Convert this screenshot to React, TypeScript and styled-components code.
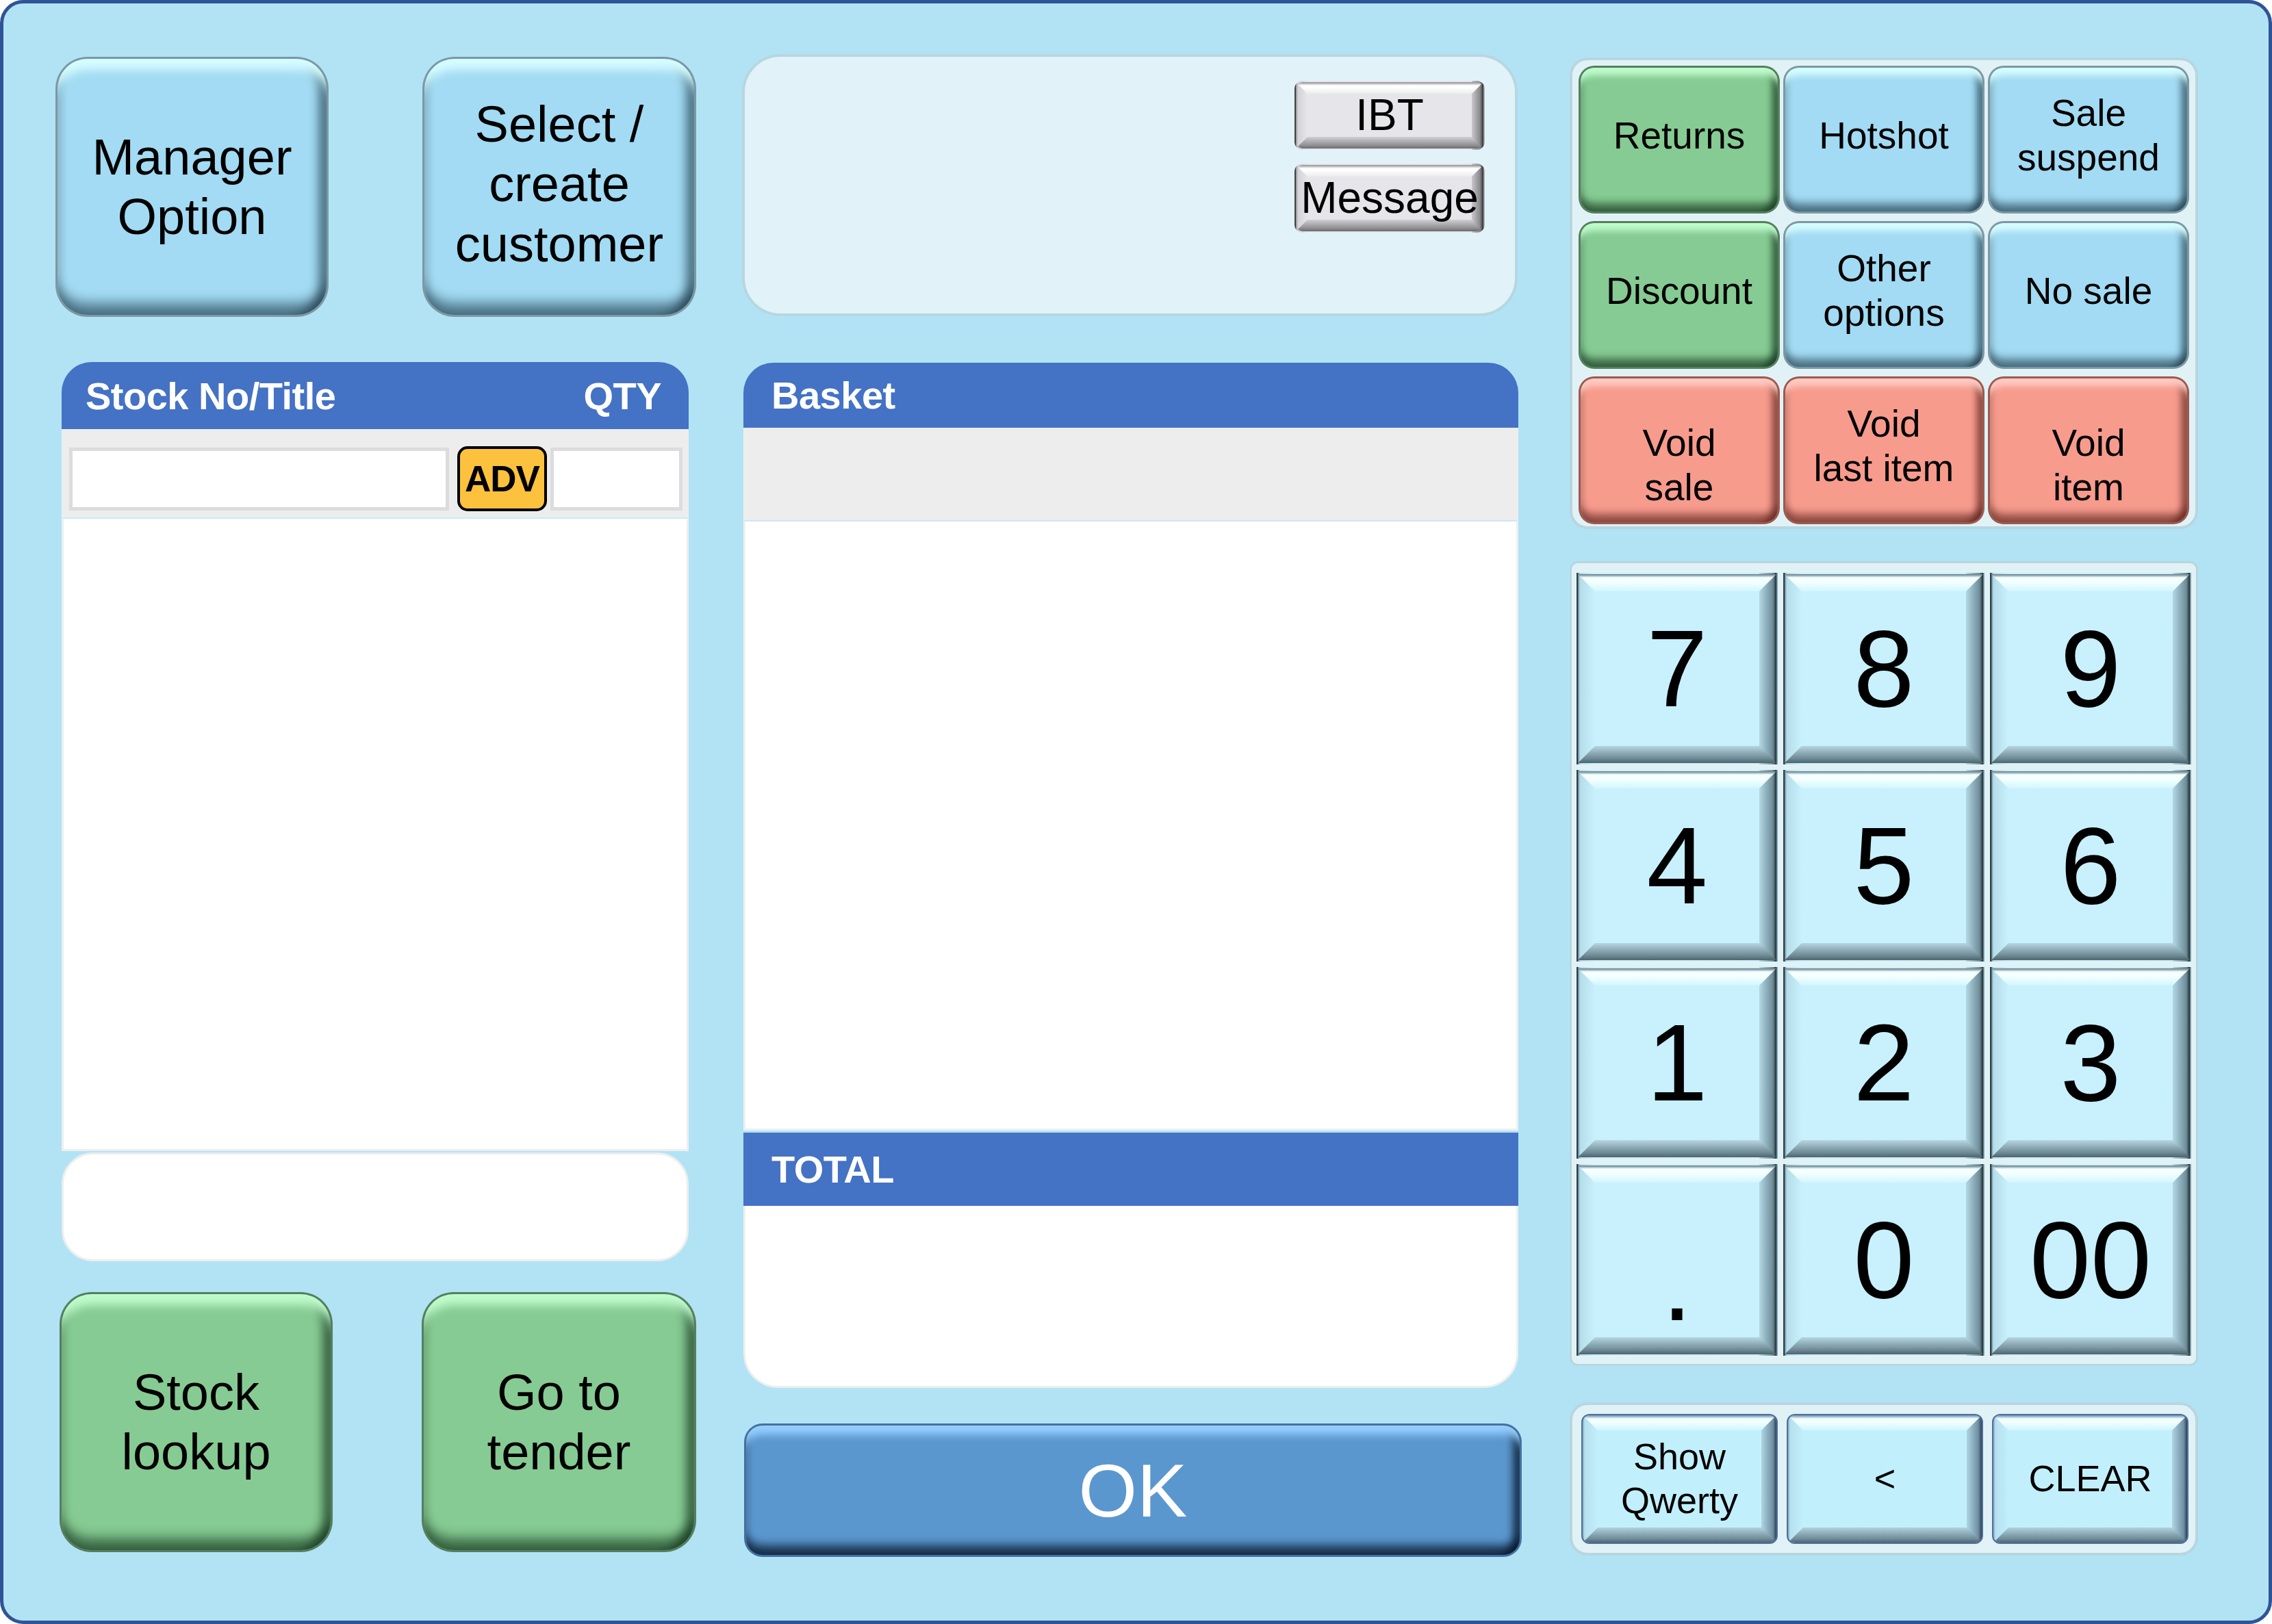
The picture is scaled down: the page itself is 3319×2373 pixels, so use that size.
import React from 'react';
import styled, { createGlobalStyle } from 'styled-components';

const GlobalStyle = createGlobalStyle`
  html, body { margin: 0; padding: 0; background: #ffffff; }
  body { font-family: "Liberation Sans", Arial, sans-serif; }
  *, *::before, *::after { box-sizing: border-box; }
`;

type Tone = 'blue' | 'green' | 'red' | 'ok';

const glossTones: Record<Tone, { fill: string; hi: string; edge: string; ring: string }> = {
  blue: { fill: '#A2DBF3', hi: '#D6FDFF', edge: 'rgba(15,40,55,0.55)', ring: '#7C98A3' },
  green: { fill: '#86CB93', hi: '#C0FCCD', edge: 'rgba(10,40,18,0.6)', ring: '#557F5E' },
  red: { fill: '#F79B8D', hi: '#FFCBC2', edge: 'rgba(70,18,12,0.55)', ring: '#9C5A50' },
  ok: { fill: '#5B97CF', hi: '#95CFFF', edge: 'rgba(4,18,36,0.75)', ring: '#4670A0' },
};

type BevelTone = 'cyan' | 'grey' | 'key';

const bevelTones: Record<
  BevelTone,
  {
    fill: string;
    topEdge: string;
    topLight: string;
    topInner: string;
    leftOuter: string;
    leftInner: string;
    rightInner: string;
    rightOuter: string;
    rightEdge: string;
    botInner: string;
    botOuter: string;
    botEdge: string;
    border: string;
  }
> = {
  cyan: {
    fill: '#C8F1FD',
    topEdge: '#5C7782',
    topLight: '#F4FFFF',
    topInner: '#D2F6FF',
    leftOuter: '#5C7782',
    leftInner: '#B4DCE9',
    rightInner: '#B3D8E4',
    rightOuter: '#6D8C98',
    rightEdge: '#1E2B31',
    botInner: '#B6D6E1',
    botOuter: '#6C8893',
    botEdge: '#4E646D',
    border: 'transparent',
  },
  key: {
    fill: '#C2EFFC',
    topEdge: '#6C8FB0',
    topLight: '#F2FFFF',
    topInner: '#CFF5FF',
    leftOuter: '#7FA4C0',
    leftInner: '#B6E0EE',
    rightInner: '#AFD5E2',
    rightOuter: '#6F8FA3',
    rightEdge: '#2C4258',
    botInner: '#B0D2DE',
    botOuter: '#6F8C98',
    botEdge: '#4E6675',
    border: '#4F719C',
  },
  grey: {
    fill: '#E6E6EA',
    topEdge: '#8C8C90',
    topLight: '#FFFFFF',
    topInner: '#ECECEF',
    leftOuter: '#8C8C90',
    leftInner: '#D3D3D7',
    rightInner: '#C8C8CC',
    rightOuter: '#8A8A8E',
    rightEdge: '#303033',
    botInner: '#D0D0D4',
    botOuter: '#8E8E92',
    botEdge: '#6A6A6E',
    border: 'transparent',
  },
};

const Frame = styled.div`
  width: 3319px;
  height: 2373px;
  border: 5px solid #2f5496;
  border-radius: 34px;
  background: #b1e3f5;
  padding: 74px 0 0 79px;
  display: flex;
  align-items: flex-start;
  font-family: "Liberation Sans", Arial, sans-serif;
  color: #000;
  overflow: hidden;
`;

const LeftColumn = styled.div`
  width: 930px;
  flex: none;
  display: flex;
  flex-direction: column;
`;

const MiddleColumn = styled.div`
  width: 1136px;
  flex: none;
  margin-left: 70px;
  display: flex;
  flex-direction: column;
`;

const RightColumn = styled.div`
  width: 918px;
  flex: none;
  margin-left: 73px;
  display: flex;
  flex-direction: column;
`;

const BigRow = styled.div<{ $top: number; $inset: number }>`
  display: flex;
  justify-content: space-between;
  margin-top: ${(p) => p.$top}px;
  padding-left: ${(p) => p.$inset}px;
`;

const GlossButton = styled.div<{
  $tone: Tone;
  $w: number;
  $h: number;
  $radius: number;
  $size: number;
  $bevel: number;
  $drop?: number;
  $lift?: number;
  $light?: boolean;
}>`
  width: ${(p) => p.$w}px;
  height: ${(p) => p.$h}px;
  flex: none;
  border-radius: ${(p) => p.$radius}px;
  background: ${(p) => glossTones[p.$tone].fill};
  display: flex;
  align-items: center;
  justify-content: center;
  text-align: center;
  padding-top: ${(p) => p.$drop ?? 0}px;
  padding-bottom: ${(p) => p.$lift ?? 0}px;
  font-size: ${(p) => p.$size}px;
  line-height: 1.18;
  color: ${(p) => (p.$light ? '#ffffff' : '#000000')};
  box-shadow:
    0 0 0 3px ${(p) => glossTones[p.$tone].ring},
    inset 0 ${(p) => p.$bevel}px ${(p) => Math.round(p.$bevel * 0.6)}px -${(p) => Math.round(p.$bevel * 0.35)}px
      ${(p) => glossTones[p.$tone].hi},
    inset -${(p) => Math.round(p.$bevel * 0.75)}px 0 ${(p) => Math.round(p.$bevel * 0.6)}px -${(p) => Math.round(p.$bevel * 0.25)}px
      ${(p) => glossTones[p.$tone].edge},
    inset 0 -${(p) => p.$bevel}px ${(p) => Math.round(p.$bevel * 0.7)}px -${(p) => Math.round(p.$bevel * 0.3)}px
      ${(p) => glossTones[p.$tone].edge},
    inset ${(p) => Math.round(p.$bevel * 0.5)}px 0 ${(p) => Math.round(p.$bevel * 0.5)}px -${(p) => Math.round(p.$bevel * 0.25)}px
      rgba(0, 0, 0, 0.12);
`;

const Bevel = styled.div<{
  $tone: BevelTone;
  $radius: number;
  $bw: number;
  $size: number;
  $drop?: number;
}>`
  position: relative;
  overflow: hidden;
  border-radius: ${(p) => p.$radius}px;
  border: 2px solid ${(p) => bevelTones[p.$tone].border};
  display: flex;
  align-items: center;
  justify-content: center;
  text-align: center;
  padding-top: ${(p) => p.$drop ?? 0}px;
  font-size: ${(p) => p.$size}px;
  line-height: 1.18;
  white-space: nowrap;
  background: linear-gradient(
    to right,
    ${(p) => bevelTones[p.$tone].leftOuter} 0,
    ${(p) => bevelTones[p.$tone].leftInner} 3px,
    ${(p) => bevelTones[p.$tone].fill} ${(p) => p.$bw}px,
    ${(p) => bevelTones[p.$tone].fill} calc(100% - ${(p) => p.$bw}px),
    ${(p) => bevelTones[p.$tone].rightInner} calc(100% - ${(p) => p.$bw}px),
    ${(p) => bevelTones[p.$tone].rightOuter} calc(100% - 5px),
    ${(p) => bevelTones[p.$tone].rightEdge} 100%
  );

  &::before {
    content: '';
    position: absolute;
    left: 0;
    right: 0;
    top: 0;
    height: ${(p) => p.$bw}px;
    background: linear-gradient(
      to bottom,
      ${(p) => bevelTones[p.$tone].topEdge} 0,
      ${(p) => bevelTones[p.$tone].topLight} 5px,
      ${(p) => bevelTones[p.$tone].topLight} 45%,
      ${(p) => bevelTones[p.$tone].topInner} 100%
    );
    clip-path: polygon(0 0, 100% 0, calc(100% - ${(p) => p.$bw}px) 100%, ${(p) => p.$bw}px 100%);
  }

  &::after {
    content: '';
    position: absolute;
    left: 0;
    right: 0;
    bottom: 0;
    height: ${(p) => p.$bw}px;
    background: linear-gradient(
      to bottom,
      ${(p) => bevelTones[p.$tone].botInner} 0,
      ${(p) => bevelTones[p.$tone].botOuter} 75%,
      ${(p) => bevelTones[p.$tone].botEdge} 100%
    );
    clip-path: polygon(${(p) => p.$bw}px 0, calc(100% - ${(p) => p.$bw}px) 0, 100% 100%, 0 100%);
  }
`;

const Label = styled.span`
  position: relative;
  z-index: 1;
`;

/* ---------- stock panel ---------- */

const StockPanel = styled.div`
  margin-top: 69px;
  margin-left: 6px;
  width: 916px;
  display: flex;
  flex-direction: column;
`;

const BlueHeader = styled.div<{ $height: number; $rounded: boolean; $padL: number; $padR: number; $top?: number }>`
  height: ${(p) => p.$height}px;
  margin-top: ${(p) => p.$top ?? 0}px;
  background: #4472c4;
  border-radius: ${(p) => (p.$rounded ? '44px 44px 0 0' : '0')};
  display: flex;
  align-items: center;
  justify-content: space-between;
  padding: 0 ${(p) => p.$padR}px 0 ${(p) => p.$padL}px;
  color: #ffffff;
  font-weight: 700;
  font-size: 56px;
  letter-spacing: -0.5px;
`;

const GreyBand = styled.div<{ $height: number; $padTop?: number }>`
  height: ${(p) => p.$height}px;
  background: #ededed;
  display: flex;
  align-items: center;
  padding: ${(p) => p.$padTop ?? 0}px 5px 0 11px;
`;

const TextField = styled.div<{ $w: number }>`
  width: ${(p) => p.$w}px;
  height: 92px;
  background: #ffffff;
  border: 5px solid #dcdbdd;
  flex: none;
`;

const AdvButton = styled.div`
  width: 131px;
  height: 95px;
  margin: 0 5px 0 12px;
  flex: none;
  background: #fcc13d;
  border: 4px solid #000000;
  border-radius: 15px;
  display: flex;
  align-items: center;
  justify-content: center;
  font-weight: 700;
  font-size: 53px;
  letter-spacing: -1px;
`;

const ListArea = styled.div<{ $height: number }>`
  height: ${(p) => p.$height}px;
  background: #ffffff;
  border: 3px solid #efefef;
  border-top: 2px solid #c9e9f5;
`;

const FooterBox = styled.div`
  height: 159px;
  margin-top: 2px;
  background: #ffffff;
  border: 3px solid #eeeeee;
  border-radius: 46px;
`;

/* ---------- middle ---------- */

const InfoPanel = styled.div`
  width: 1133px;
  height: 383px;
  background: #e1f3f8;
  border: 4px solid #b7d7e0;
  border-radius: 56px;
  display: flex;
  flex-direction: column;
  align-items: flex-end;
  gap: 20px;
  padding: 35px 44px 0 0;
`;

const SmallKey = styled(Bevel)`
  width: 278px;
  height: 101px;
`;

const BasketPanel = styled.div`
  margin-top: 68px;
  margin-left: 2px;
  width: 1132px;
  height: 1498px;
  display: flex;
  flex-direction: column;
`;

const TotalBody = styled.div`
  height: 266px;
  background: #ffffff;
  border: 3px solid #efefef;
  border-top: none;
  border-radius: 0 0 50px 50px;
`;

const OkRow = styled.div`
  margin-top: 55px;
  margin-left: 6px;
`;

/* ---------- right ---------- */

const ControlPanel = styled.div<{ $radius: number; $top: number; $pad: string; $border: number }>`
  margin-top: ${(p) => p.$top}px;
  width: 918px;
  background: #e1f2f7;
  border: ${(p) => p.$border}px solid #b8d6df;
  border-radius: ${(p) => p.$radius}px;
  padding: ${(p) => p.$pad};
`;

const KeyGrid = styled.div<{ $col: number; $row: number; $gapX: number; $gapY: number }>`
  display: grid;
  grid-template-columns: repeat(3, ${(p) => p.$col}px);
  grid-auto-rows: ${(p) => p.$row}px;
  column-gap: ${(p) => p.$gapX}px;
  row-gap: ${(p) => p.$gapY}px;
`;

const functionKeys: { label: React.ReactNode; tone: Tone; drop?: number }[] = [
  { label: 'Returns', tone: 'green' },
  { label: 'Hotshot', tone: 'blue' },
  { label: <>Sale<br />suspend</>, tone: 'blue' },
  { label: 'Discount', tone: 'green' },
  { label: <>Other<br />options</>, tone: 'blue' },
  { label: 'No sale', tone: 'blue' },
  { label: <>Void<br />sale</>, tone: 'red', drop: 44 },
  { label: <>Void<br />last item</>, tone: 'red' },
  { label: <>Void<br />item</>, tone: 'red', drop: 44 },
];

const digits: { label: string; drop?: number }[] = [
  { label: '7' },
  { label: '8' },
  { label: '9' },
  { label: '4' },
  { label: '5' },
  { label: '6' },
  { label: '1' },
  { label: '2' },
  { label: '3' },
  { label: '.', drop: 66 },
  { label: '0' },
  { label: '00' },
];

const bottomKeys: { label: React.ReactNode }[] = [
  { label: <>Show<br />Qwerty</> },
  { label: '<' },
  { label: 'CLEAR' },
];

export default function App() {
  return (
    <>
      <GlobalStyle />
      <Frame>
        <LeftColumn>
          <BigRow $top={7} $inset={0}>
            <GlossButton $tone="blue" $w={393} $h={374} $radius={44} $size={74} $bevel={24}>
              Manager
              <br />
              Option
            </GlossButton>
            <GlossButton $tone="blue" $w={394} $h={374} $radius={44} $size={74} $bevel={24} $lift={8}>
              Select /<br />
              create
              <br />
              customer
            </GlossButton>
          </BigRow>

          <StockPanel>
            <BlueHeader $height={98} $rounded $padL={35} $padR={40}>
              <span>Stock No/Title</span>
              <span>QTY</span>
            </BlueHeader>
            <GreyBand $height={129} $padTop={16}>
              <TextField $w={555} />
              <AdvButton>ADV</AdvButton>
              <TextField $w={193} />
            </GreyBand>
            <ListArea $height={926} />
            <FooterBox />
          </StockPanel>

          <BigRow $top={48} $inset={6}>
            <GlossButton $tone="green" $w={393} $h={374} $radius={44} $size={74} $bevel={24}>
              Stock
              <br />
              lookup
            </GlossButton>
            <GlossButton $tone="green" $w={395} $h={374} $radius={44} $size={74} $bevel={24}>
              Go to
              <br />
              tender
            </GlossButton>
          </BigRow>
        </LeftColumn>

        <MiddleColumn>
          <InfoPanel>
            <SmallKey $tone="grey" $radius={12} $bw={17} $size={64}>
              <Label>IBT</Label>
            </SmallKey>
            <SmallKey $tone="grey" $radius={12} $bw={17} $size={64}>
              <Label>Message</Label>
            </SmallKey>
          </InfoPanel>

          <BasketPanel>
            <BlueHeader $height={95} $rounded $padL={41} $padR={40}>
              <span>Basket</span>
            </BlueHeader>
            <GreyBand $height={135} />
            <ListArea $height={892} />
            <BlueHeader $height={107} $rounded={false} $padL={41} $padR={40} $top={3}>
              <span>TOTAL</span>
            </BlueHeader>
            <TotalBody />
          </BasketPanel>

          <OkRow>
            <GlossButton $tone="ok" $w={1130} $h={189} $radius={24} $size={110} $bevel={20} $light>
              OK
            </GlossButton>
          </OkRow>
        </MiddleColumn>

        <RightColumn>
          <ControlPanel $radius={26} $top={5} $pad="11px 12px 6px 12px" $border={4}>
            <KeyGrid $col={288} $row={210} $gapX={11} $gapY={17}>
              {functionKeys.map((k, i) => (
                <GlossButton
                  key={i}
                  $tone={k.tone}
                  $w={288}
                  $h={210}
                  $radius={20}
                  $size={55}
                  $bevel={17}
                  $drop={k.drop}
                  $lift={k.drop ? 0 : 12}
                >
                  <span>{k.label}</span>
                </GlossButton>
              ))}
            </KeyGrid>
          </ControlPanel>

          <ControlPanel $radius={12} $top={47} $pad="14px 8px 12px 7px" $border={3}>
            <KeyGrid $col={294} $row={280} $gapX={8} $gapY={8}>
              {digits.map((d, i) => (
                <Bevel key={i} $tone="cyan" $radius={0} $bw={25} $size={160} $drop={d.drop}>
                  <Label>{d.label}</Label>
                </Bevel>
              ))}
            </KeyGrid>
          </ControlPanel>

          <ControlPanel $radius={26} $top={53} $pad="13px 11px 13px 13px" $border={4}>
            <KeyGrid $col={287} $row={190} $gapX={13} $gapY={0}>
              {bottomKeys.map((k, i) => (
                <Bevel key={i} $tone="key" $radius={12} $bw={22} $size={54}>
                  <Label>{k.label}</Label>
                </Bevel>
              ))}
            </KeyGrid>
          </ControlPanel>
        </RightColumn>
      </Frame>
    </>
  );
}
